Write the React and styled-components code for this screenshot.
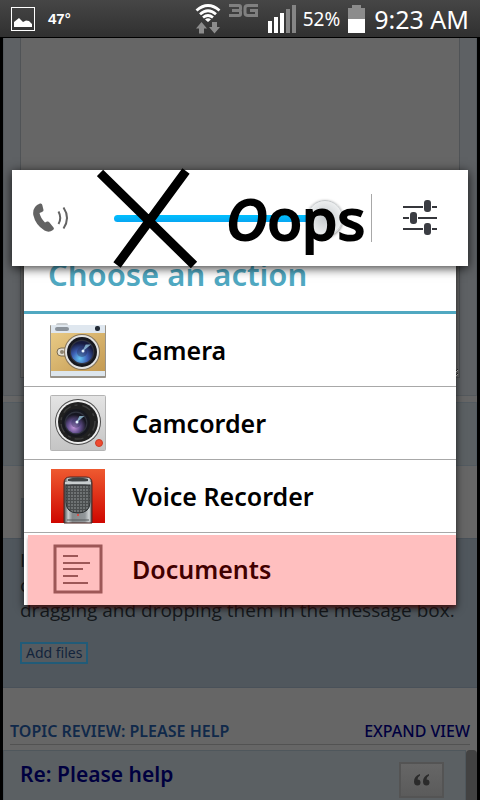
import React, { useState } from 'react';
import styled, { createGlobalStyle } from 'styled-components';

export default function App() {
  const [volume, setVolume] = useState(100);

  return (
    <Screen>
      <GlobalStyle />
      <StatusBar>
        <PictureIcon />
        <Temperature>47°</Temperature>
        <Spacer />
        <WifiIcon />
        <NetworkIcon />
        <SignalIcon />
        <Battery>52%</Battery>
        <BatteryIcon />
        <Clock>9:23 AM</Clock>
      </StatusBar>

      <Page>
        <EditorPanel>
          <MessageBox aria-label="Message" />
        </EditorPanel>
        <ButtonPanel />
        <TabArea>
          <Tab />
        </TabArea>
        <AttachPanel>
          <AttachText>
            I<br />
            c<br />
            dragging and dropping them in the message box.
          </AttachText>
          <AddButton type="button">Add files</AddButton>
        </AttachPanel>
        <ReviewHeader>
          <ReviewTitle>TOPIC REVIEW: PLEASE HELP</ReviewTitle>
          <ReviewLink href="#expand">EXPAND VIEW</ReviewLink>
        </ReviewHeader>
        <ReviewBody>
          <Post>
            <PostLink href="#post">Re: Please help</PostLink>
            <QuoteButton type="button" aria-label="Quote">
              <QuoteIcon />
            </QuoteButton>
          </Post>
          <ScrollThumb />
        </ReviewBody>
      </Page>

      <Dialog role="dialog" aria-labelledby="dialog-title">
        <DialogTitle id="dialog-title">Choose an action</DialogTitle>
        <Action type="button"><CameraIcon />Camera</Action>
        <Action type="button"><CamcorderIcon />Camcorder</Action>
        <Action type="button"><RecorderIcon />Voice Recorder</Action>
        <Action type="button" $marked><DocumentIcon />Documents</Action>
      </Dialog>

      <VolumePanel>
        <PhoneIcon />
        <Slider
          type="range"
          aria-label="Call volume"
          value={volume}
          onChange={e => setVolume(Number(e.target.value))}
        />
        <SettingsButton type="button" aria-label="Volume settings">
          <SlidersIcon />
        </SettingsButton>
        <Cross />
        <Scribble><i>O</i>ops</Scribble>
      </VolumePanel>
    </Screen>
  );
}

function PictureIcon() {
  return (
    <svg width="24" height="24" viewBox="0 0 24 24" aria-hidden="true">
      <rect x="0.5" y="0.5" width="23" height="23" fill="none" stroke="#fff" />
      <path d="M3 20V15L8 11L12 15L15 13.500L18 14L21 17V20Z" fill="#fff" />
    </svg>
  );
}

function WifiIcon() {
  return (
    <svg width="26" height="30" viewBox="0 0 26 30" aria-hidden="true">
      <g fill="none" stroke="#fff" strokeWidth="2.800">
        <path d="M1.500 6.500Q13-3.500 24.500 6.500" />
        <path d="M5 10.200Q13 3.200 21 10.200" />
        <path d="M8 13.500Q13 9.500 18 13.500" />
      </g>
      <path d="M10 15.500Q13 13 16 15.500L13 18Z" fill="#fff" />
      <path d="M6.500 18L12 24.500H9V29.500H4V24.500H1Z" fill="#8c8c8c" />
      <path d="M17 18H22V23H25L19.500 29.500L14 23H17Z" fill="#8c8c8c" />
    </svg>
  );
}

function NetworkIcon() {
  return (
    <NetworkSvg width="31" height="14" viewBox="0 0 31 14" role="img" aria-label="3G">
      <g fill="none" stroke="#808080" strokeWidth="3">
        <path d="M1 1.500H11Q12.500 1.500 12.500 3V5Q12.500 6.500 11 6.500H4M11 6.500Q12.500 6.500 12.500 8V10Q12.500 11.500 11 11.500H1" />
        <path d="M30 1.500H20Q17 1.500 17 4V9Q17 11.500 20 11.500H28.500V6.500H22" />
      </g>
    </NetworkSvg>
  );
}

function SignalIcon() {
  return (
    <svg width="28" height="28" viewBox="0 0 28 28" aria-hidden="true">
      <path d="M0 16H4V28H0ZM6 12H10V28H6ZM12 8H16V28H12Z" fill="#fff" />
      <path d="M18 4H22V28H18ZM24 0H28V28H24Z" fill="#858585" />
    </svg>
  );
}

function BatteryIcon() {
  return (
    <svg width="17" height="28" viewBox="0 0 17 28" aria-hidden="true">
      <path d="M4 0H13V3H17V14H0V3H4Z" fill="#8c8c8c" />
      <path d="M0 14H17V28H0Z" fill="#fff" />
    </svg>
  );
}

function QuoteIcon() {
  return (
    <svg width="16" height="12" viewBox="0 0 16 12" aria-hidden="true">
      <path d="M6 0Q0 2 0 7.500Q0 11.500 3.500 11.500Q6.500 11.500 6.500 8.500Q6.500 5.500 3.500 5.500Q3.500 3 6 1.500ZM15 0Q9 2 9 7.500Q9 11.500 12.500 11.500Q15.500 11.500 15.500 8.500Q15.500 5.500 12.500 5.500Q12.500 3 15 1.500Z" fill="#2b2b2b" />
    </svg>
  );
}

function PhoneIcon() {
  return (
    <svg width="36" height="30" viewBox="0 0 36 30" aria-hidden="true">
      <path d="M7 .5Q9 0 9.300 2L10.500 7Q10.700 8.500 9 9L6.500 10Q7.500 15 12 19.500L14 18.500Q15.500 18 16.500 19.500L20.500 24.500Q21.500 26 20 27Q16 30 11.500 27.500Q2.500 22 .3 12Q-.8 3.500 7 .5Z" fill="#636363" />
      <path d="M25.500 8.500Q29 15 25.500 21M30.500 4.500Q37.500 15 30.500 25.500" fill="none" stroke="#636363" strokeWidth="2" />
    </svg>
  );
}

function SlidersIcon() {
  return (
    <svg width="34" height="36" viewBox="0 0 34 36" aria-hidden="true">
      <path d="M0 7H20M29 7H34M0 18H6M15 18H34M0 29H20M29 29H34" stroke="#35363b" strokeWidth="2" />
      <g fill="#3b3d43">
        <rect x="21" y="0" width="7" height="12" rx="3" />
        <rect x="7" y="12" width="7" height="12" rx="3" />
        <rect x="21" y="23" width="7" height="12" rx="3" />
      </g>
    </svg>
  );
}

function Cross() {
  return (
    <CrossSvg width="102" height="102" viewBox="0 0 102 102" aria-hidden="true">
      <path d="M3 5L97 97M89 3L20 97" stroke="#000" strokeWidth="9" />
    </CrossSvg>
  );
}

function Lens({ cx, cy, r, tint }) {
  return (
    <g>
      <circle cx={cx} cy={cy} r={r} fill="#17181f" />
      <circle cx={cx} cy={cy} r={r * 0.82} fill="#30333f" />
      <circle cx={cx} cy={cy} r={r * 0.74} fill={`url(#${tint})`} />
      <circle cx={cx} cy={cy} r={r * 0.34} fill="#2a2f55" opacity="0.4" />
      <path d={`M${cx} ${cy}L${cx + r * 0.25} ${cy - r * 0.5}L${cx + r * 0.6} ${cy - r * 0.5}Z`} fill="#a8dcf2" opacity="0.7" />
      <circle cx={cx + 1} cy={cy - 1} r="1.500" fill="#e8f6ff" />
    </g>
  );
}

function CameraIcon() {
  return (
    <svg width="56" height="56" viewBox="0 0 56 56" aria-hidden="true">
      <defs>
        <linearGradient id="gold" x2="1" y2="1">
          <stop offset="0" stopColor="#e8ca85" />
          <stop offset="1" stopColor="#c49a52" />
        </linearGradient>
        <radialGradient id="blue" cx="0.4" cy="0.8" r="0.7">
          <stop offset="0" stopColor="#65c5f4" />
          <stop offset="0.5" stopColor="#3d5fb4" />
          <stop offset="1" stopColor="#171b3e" />
        </radialGradient>
      </defs>
      <rect x="6" y="1" width="12" height="4" rx="2" fill="#c9cdd0" />
      <rect x="0" y="3" width="56" height="53" rx="1" fill="#98938a" />
      <rect x="1" y="3" width="54" height="8" fill="#dfe7ef" />
      <rect x="1" y="11" width="54" height="38" fill="url(#gold)" />
      <rect x="1" y="49" width="54" height="5" fill="#dde6ed" />
      <rect x="5" y="5" width="14" height="4" rx="2" fill="#8b929a" />
      <rect x="45" y="4" width="5" height="5" rx="2" fill="#222a36" />
      <rect x="7" y="26" width="12" height="8" rx="4" fill="#e3dfd4" stroke="#7b6c50" />
      <circle cx="12" cy="30" r="2" fill="#8e8470" />
      <circle cx="32" cy="30" r="18" fill="#85745a" />
      <circle cx="32" cy="30" r="17" fill="#e2e3e2" />
      <Lens cx={32} cy={30} r={15} tint="blue" />
    </svg>
  );
}

function CamcorderIcon() {
  return (
    <svg width="56" height="56" viewBox="0 0 56 56" aria-hidden="true">
      <defs>
        <linearGradient id="silver" x2="0" y2="1">
          <stop offset="0" stopColor="#e4e4e4" />
          <stop offset="1" stopColor="#c4c4c4" />
        </linearGradient>
        <radialGradient id="violet" cx="0.4" cy="0.7" r="0.6">
          <stop offset="0" stopColor="#c598dc" />
          <stop offset="0.5" stopColor="#64508f" />
          <stop offset="1" stopColor="#161621" />
        </radialGradient>
      </defs>
      <rect x="0.500" y="0.500" width="55" height="55" rx="1" fill="url(#silver)" stroke="#b4b4b4" />
      <circle cx="28" cy="27" r="23" fill="#4c4c4c" />
      <circle cx="28" cy="27" r="22" fill="#eee" />
      <circle cx="28" cy="27" r="20" fill="#202020" />
      <circle cx="28" cy="27" r="17" fill="none" stroke="#3c3c3c" strokeWidth="1.500" strokeDasharray="9 4 3 5" />
      <Lens cx={26} cy={28} r={14} tint="violet" />
      <circle cx="49" cy="48" r="3.500" fill="#ef4a30" stroke="#c93a25" />
    </svg>
  );
}

function RecorderIcon() {
  return (
    <svg width="56" height="56" viewBox="0 0 56 56" aria-hidden="true">
      <defs>
        <linearGradient id="red" x2="0" y2="1">
          <stop offset="0" stopColor="#ee5a30" />
          <stop offset="1" stopColor="#cf0700" />
        </linearGradient>
        <linearGradient id="metal">
          <stop offset="0" stopColor="#45484a" />
          <stop offset="0.15" stopColor="#c8cdcf" />
          <stop offset="0.3" stopColor="#84898b" />
          <stop offset="0.75" stopColor="#92979a" />
          <stop offset="0.9" stopColor="#d2d6d8" />
          <stop offset="1" stopColor="#404345" />
        </linearGradient>
        <pattern id="mesh" width="3" height="3" patternUnits="userSpaceOnUse">
          <rect width="3" height="3" fill="#4a4d4e" />
          <rect width="2" height="2" fill="#6e7273" />
        </pattern>
      </defs>
      <rect x="1" y="1" width="54" height="54" fill="url(#red)" />
      <path d="M14 55V15Q14 9 20 9H36Q42 9 42 15V55Z" fill="url(#metal)" stroke="#4a2520" />
      <path d="M18 13V11Q28 8 38 11V13Z" fill="#3e4243" />
      <path d="M16 17H40V34Q40 45 28 45Q16 45 16 34Z" fill="url(#mesh)" stroke="#303335" />
      <path d="M15 15H41" stroke="#c9cecf" strokeWidth="2" />
      <circle cx="28" cy="47" r="1" fill="#f43a2e" />
      <path d="M17 52H39" stroke="#575b5c" strokeWidth="1" />
    </svg>
  );
}

function DocumentIcon() {
  return (
    <svg width="56" height="56" viewBox="0 0 56 56" aria-hidden="true">
      <rect x="5" y="5" width="46" height="46" fill="none" stroke="#7d7575" strokeWidth="3" />
      <path d="M13 15H28M13 22H40M13 28H33M13 35H28M13 42H38" stroke="#7d7575" strokeWidth="2" />
    </svg>
  );
}

const GlobalStyle = createGlobalStyle`
  * {
    box-sizing: border-box;
  }

  body {
    margin: 0;
    background: #000;
    font-family: "Noto Sans", "Open Sans", sans-serif;
  }

  button {
    font-family: inherit;
    cursor: pointer;
  }

  svg {
    display: block;
    flex: none;
  }
`;

const Screen = styled.div`
  position: relative;
  display: flex;
  flex-direction: column;
  height: 100vh;
  overflow: hidden;
`;

const StatusBar = styled.header`
  display: flex;
  flex: none;
  align-items: center;
  height: 38px;
  padding: 0 11px;
  border-bottom: 1px solid #000;
  background: linear-gradient(#464646, #303030);
  color: #fff;
`;

const Temperature = styled.span`
  margin-left: 13px;
  font: bold 15px "Liberation Sans", sans-serif;
`;

const Spacer = styled.span`
  flex: 1;
`;

const NetworkSvg = styled.svg`
  align-self: flex-start;
  margin: 4px 9px 0 7px;
`;

const Battery = styled.span`
  margin: 0 8px 0 7px;
  font-size: 19px;
`;

const Clock = styled.span`
  margin-left: 9px;
  font-size: 25px;
`;

const Page = styled.main`
  flex: 1;
  margin: 0 3px;
  overflow: hidden;
  background: #666;
`;

const EditorPanel = styled.section`
  height: 358px;
  padding: 0 16px 17px;
  border: solid #54595d;
  border-width: 0 1px 1px;
  background: #5e6164;
`;

const MessageBox = styled.textarea`
  display: block;
  width: 100%;
  height: 100%;
  border: 1px solid #505356;
  border-top: 0;
  background: #666;
  resize: vertical;
`;

const ButtonPanel = styled.section`
  height: 64px;
  margin-top: 6px;
  border: 1px solid #535b61;
  background: #5b6063;
`;

const TabArea = styled.div`
  display: flex;
  align-items: flex-end;
  height: 72px;
  padding-left: 18px;
`;

const Tab = styled.div`
  width: 90px;
  height: 40px;
  background: #50565b;
`;

const AttachPanel = styled.section`
  height: 150px;
  padding: 9px 17px;
  border: solid #495159;
  border-width: 1px 0;
  background: #50575d;
  color: #15191c;
`;

const AttachText = styled.p`
  margin: 0 0 18px;
  font-family: "Open Sans", "Noto Sans", sans-serif;
  font-size: 19px;
  line-height: 25px;
  white-space: nowrap;
`;

const AddButton = styled.button`
  height: 22px;
  padding: 0 4px;
  border: 2px solid #215b78;
  background: #555b60;
  color: #13243b;
  font-size: 14px;
  line-height: 16px;
`;

const ReviewHeader = styled.div`
  display: flex;
  align-items: center;
  justify-content: space-between;
  height: 57px;
  margin: 0 7px 5px;
  padding-top: 30px;
  border-bottom: 1px solid #525252;
  font-size: 16px;
`;

const ReviewTitle = styled.h2`
  margin: 0;
  color: #10294a;
  font-size: inherit;
  font-weight: 600;
`;

const ReviewLink = styled.a`
  color: #00003f;
  font-weight: 500;
  text-decoration: none;
`;

const ReviewBody = styled.div`
  display: flex;
  height: 60px;
`;

const Post = styled.article`
  display: flex;
  flex: 1;
  align-items: flex-start;
  justify-content: space-between;
  padding: 11px 21px 0 16px;
  border: 1px solid #4f575c;
  background: #5b6063;
`;

const PostLink = styled.a`
  color: #00003f;
  font-size: 21px;
  font-weight: 600;
  line-height: 25px;
  text-decoration: none;
`;

const QuoteButton = styled.button`
  display: flex;
  align-items: center;
  justify-content: center;
  width: 45px;
  height: 36px;
  border: 2px solid #545454;
  background: linear-gradient(#666, #5b5b5b);
`;

const ScrollThumb = styled.div`
  width: 11px;
  border-radius: 4px 4px 0 0;
  background: #424242;
`;

const Dialog = styled.section`
  position: absolute;
  top: 240px;
  right: 24px;
  left: 24px;
  background: #fff;
  box-shadow: 0 3px 8px rgba(0, 0, 0, 0.7);
`;

const DialogTitle = styled.h1`
  height: 74px;
  margin: 0;
  padding: 14px 24px 0;
  border-bottom: 3px solid #50a8c1;
  color: #50a8c1;
  font-size: 31px;
  font-weight: 600;
  line-height: 40px;
`;

const Action = styled.button`
  position: relative;
  display: flex;
  align-items: center;
  gap: 26px;
  width: 100%;
  height: ${props => (props.$marked ? '72px' : '73px')};
  padding: 0 26px;
  border: 0;
  border-bottom: ${props => (props.$marked ? '0' : '1px solid #a8a8a8')};
  background: #fff;
  color: #000;
  font-size: 25px;
  font-weight: 600;

  &::after {
    content: '';
    display: ${props => (props.$marked ? 'block' : 'none')};
    position: absolute;
    inset: 2px 0 0 4px;
    background: rgba(255, 0, 0, 0.25);
    box-shadow: 0 3px 3px rgba(100, 0, 0, 0.4);
  }
`;

const VolumePanel = styled.section`
  position: absolute;
  top: 170px;
  right: 12px;
  left: 12px;
  display: flex;
  align-items: center;
  height: 96px;
  padding-left: 21px;
  background: #fff;
  box-shadow: 0 2px 10px rgba(0, 0, 0, 0.8);
`;

const Slider = styled.input`
  flex: 1;
  min-width: 0;
  height: 38px;
  margin: 0 28px 0 45px;
  appearance: none;
  background: none;

  &::-webkit-slider-runnable-track {
    height: 7px;
    border-radius: 4px;
    background: linear-gradient(#00c0ff, #08a6f2);
  }

  &::-webkit-slider-thumb {
    width: 36px;
    height: 36px;
    margin-top: -15px;
    border: 1px solid #c3c7c9;
    border-radius: 50%;
    appearance: none;
    background: radial-gradient(#c4c9cc, #eceeef 70%);
    box-shadow: 0 1px 3px rgba(0, 0, 0, 0.5);
  }
`;

const SettingsButton = styled.button`
  display: flex;
  align-items: center;
  justify-content: center;
  width: 97px;
  height: 48px;
  padding: 0;
  border: 0;
  border-left: 1px solid #a8a8a8;
  background: none;
`;

const CrossSvg = styled.svg`
  position: absolute;
  top: -2px;
  left: 85px;
`;

const Scribble = styled.strong`
  position: absolute;
  top: 10px;
  left: 214px;
  color: #000;
  font-size: 57px;
  font-weight: 500;
  line-height: 76px;
  pointer-events: none;
  -webkit-text-stroke: 2px #000;
`;
